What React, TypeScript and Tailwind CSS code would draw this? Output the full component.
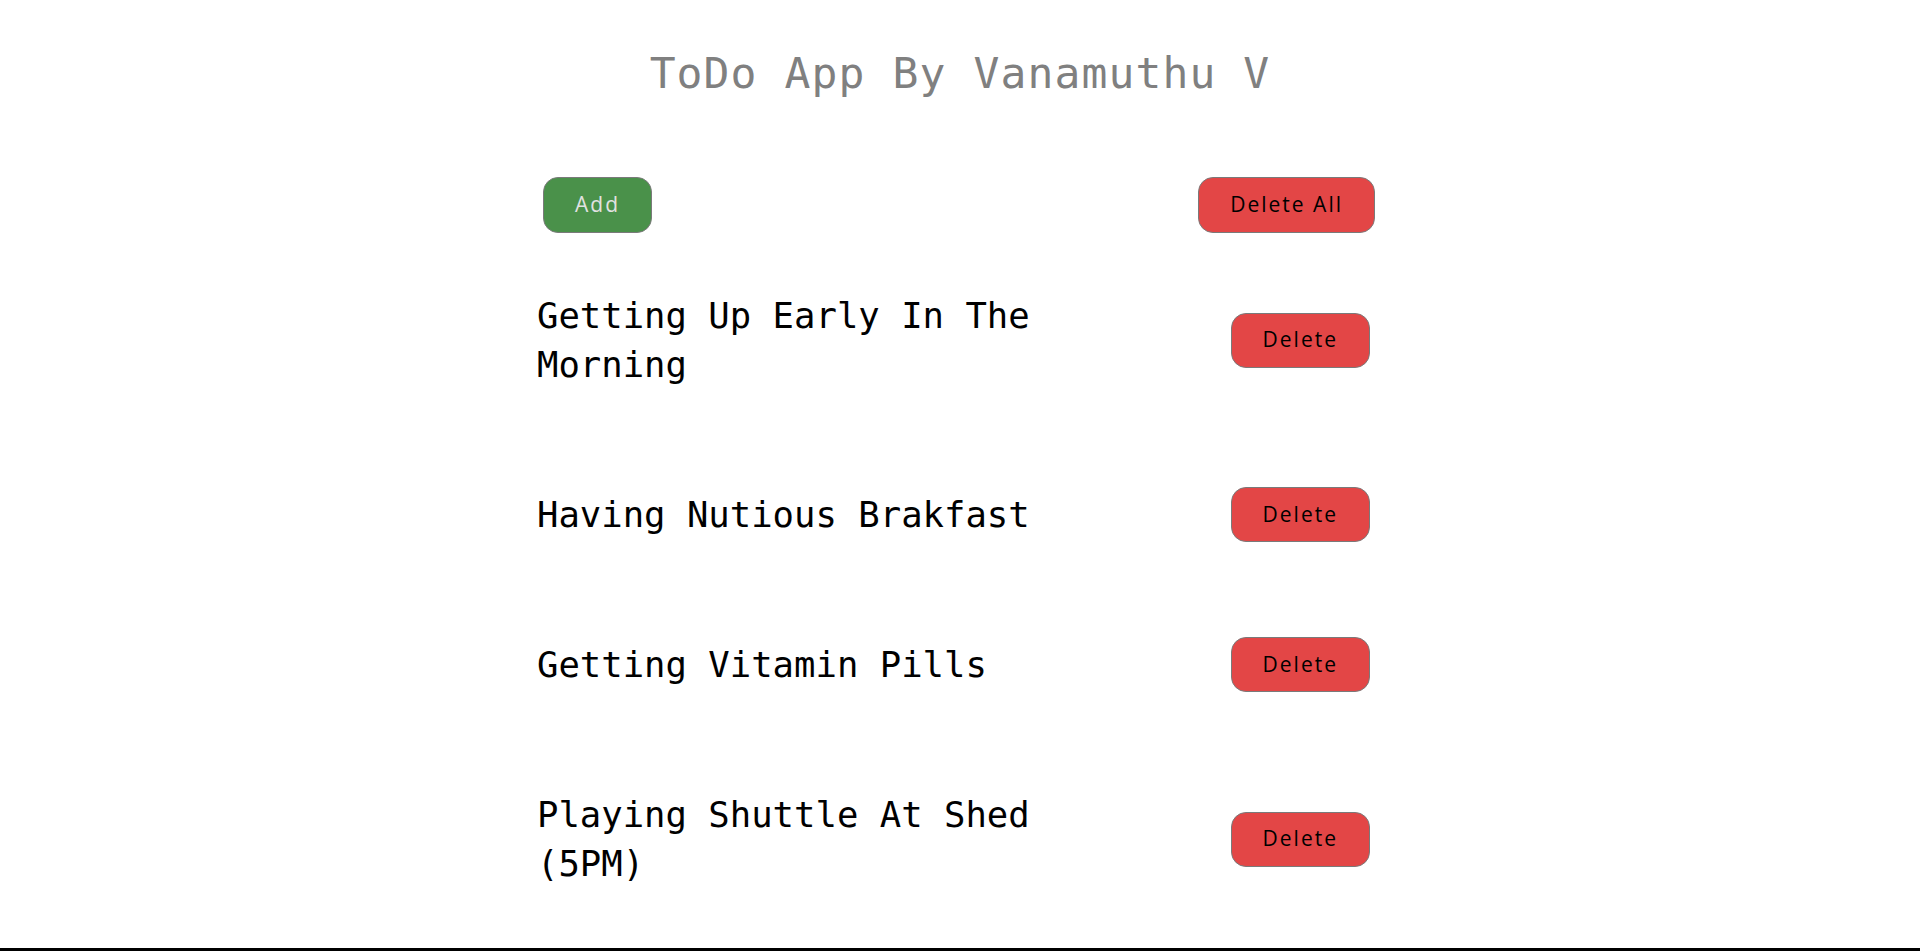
import React from 'react';

const todos = [
  'Getting Up Early In The Morning',
  'Having Nutious Brakfast',
  'Getting Vitamin Pills',
  'Playing Shuttle At Shed (5PM)',
];

const btn =
  "h-[56px] px-[31px] rounded-[15px] border border-[#7a7a7a] text-[21px] tracking-[2px] font-['Open_Sans',sans-serif]";

export default function App() {
  return (
    <div className="min-h-[951px] bg-white flex flex-col">
      <h1 className="mt-[47px] text-center text-[43px] leading-[53px] tracking-[1.1px] text-[#808080] font-['DejaVu_Sans_Mono',monospace]">
        ToDo App By Vanamuthu V
      </h1>

      <div className="w-[846px] mx-auto">
        {/* Top actions */}
        <div className="mt-[77px] flex items-center justify-between pl-[6px] pr-[8px]">
          <button className={`${btn} bg-[#4a914a] text-[#e2e2e2]`}>Add</button>
          <button className={`${btn} bg-[#e34646] text-black`}>Delete All</button>
        </div>

        {/* List */}
        <div className="mt-[48px] flex flex-col gap-[81px] pr-[13px]">
          {todos.map((t) => (
            <div key={t} className="flex items-center justify-between">
              <p className="w-[510px] py-[10px] text-[35.6px] leading-[49px] text-black font-['DejaVu_Sans_Mono',monospace]">
                {t}
              </p>
              <button className={`${btn} !h-[55px] bg-[#e34646] text-black`}>Delete</button>
            </div>
          ))}
        </div>
      </div>

      <div className="mt-[50px] h-[3px] w-full bg-black" />
    </div>
  );
}
